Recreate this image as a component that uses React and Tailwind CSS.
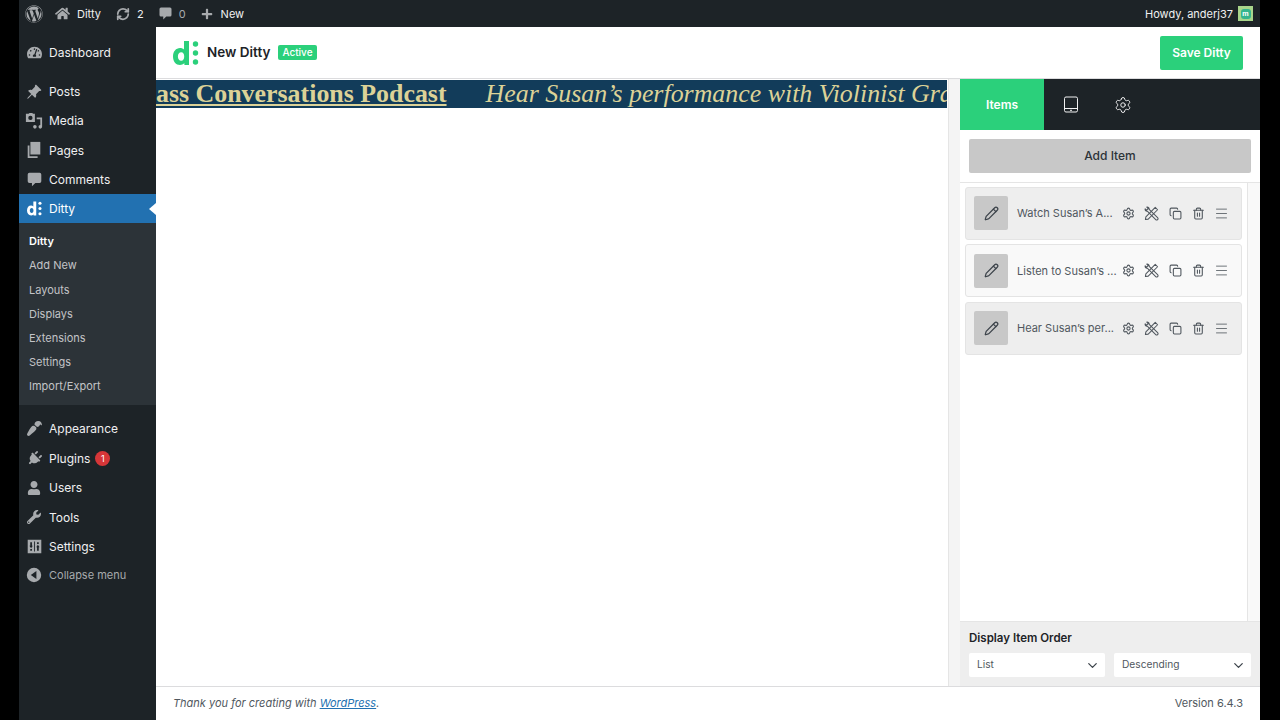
import React from 'react';
import { FaWordpress, FaTachometerAlt, FaPaintBrush, FaPlug, FaUser, FaWrench, FaHome, FaPlus } from 'react-icons/fa';
import { BsPinAngleFill } from 'react-icons/bs';
import { RefreshCw, Settings, Copy, Trash2, Menu, Pencil, ChevronDown } from 'lucide-react';

const font = { fontFamily: 'Inter, "Liberation Sans", sans-serif' };

function BubbleIcon({ size = 18, className = '' }) {
  return (
    <svg width={size} height={size} viewBox="0 0 20 20" className={className} fill="currentColor">
      <path d="M4 2h12a2 2 0 0 1 2 2v8a2 2 0 0 1-2 2h-5l-4 4v-4H4a2 2 0 0 1-2-2V4a2 2 0 0 1 2-2z" />
    </svg>
  );
}

function MediaIcon() {
  return (
    <svg width="18" height="18" viewBox="0 0 20 20" fill="currentColor">
      <path fillRule="evenodd" d="M1 2h3l1-1h3l1 1h2v9H1V2zm5 2.200a2.400 2.400 0 1 0 0 4.800 2.400 2.400 0 0 0 0-4.800z" />
      <path d="M13 6h6v10.500a2 2 0 1 1-2-2V8h-4V6z" />
      <circle cx="11" cy="16.500" r="2" />
    </svg>
  );
}

function PagesIcon() {
  return (
    <svg width="18" height="18" viewBox="0 0 20 20" fill="currentColor">
      <path d="M6 1h11v14H6z" />
      <path d="M3 5h2v12h9v2H3z" />
    </svg>
  );
}

function SlidersIcon() {
  return (
    <svg width="17" height="17" viewBox="0 0 20 20" fill="currentColor">
      <path fillRule="evenodd" d="M2 2h16v16H2V2zm3 3v4H4l2 3 2-3H7V5H5zm0 8v2h2v-2H5zm8-8v2h2V5h-2zm1 3-2 3h1v4h2v-4h1l-2-3zM9.500 4v12h1V4h-1z" />
    </svg>
  );
}

function CollapseIcon() {
  return (
    <svg width="16" height="16" viewBox="0 0 20 20" fill="currentColor">
      <path fillRule="evenodd" d="M10 1a9 9 0 1 1 0 18 9 9 0 0 1 0-18zm3 4-7 5 7 5V5z" />
    </svg>
  );
}

function TabletIcon() {
  return (
    <svg width="16" height="17" viewBox="0 0 16 17" fill="none" stroke="currentColor" strokeWidth="1">
      <rect x="1.500" y="1" width="13" height="15" rx="1.500" />
      <path d="M1.500 12.500h13" />
      <path d="M7 14.300h2" />
    </svg>
  );
}

function ToolsIcon({ className = '' }) {
  return (
    <svg width="15" height="15" viewBox="0 0 16 16" fill="none" stroke="currentColor" strokeWidth="1.100" strokeLinejoin="round" className={className}>
      <path d="M5.500 3.500 14.500 12.500a1.400 1.400 0 0 1-2 2L3.500 5.500C2 5.800 1 4.500 1.200 3l1.600 1.500L4.500 2.800 3 1.200C4.500 1 5.800 2 5.500 3.500z" />
      <path d="M12 1.500 14.500 4 4.500 14 1.500 14.500 2 11.500z" />
    </svg>
  );
}

function DittyLogo({ height, color }) {
  return (
    <svg height={height} viewBox="0 0 26 26" style={{ color }} fill="currentColor">
      <path fillRule="evenodd" d="M11 1h5v24h-4.600v-1.700A7.400 7.400 0 0 1 7 25c-4 0-7-3.500-7-8.500S3 8 7 8c1.700 0 3 .5 4 1.500V1zM8.200 12.300c-2 0-3.300 1.700-3.300 4.200s1.300 4.200 3.300 4.200 3-1.700 3-4.200-1-4.200-3-4.200z" />
      <circle cx="22.500" cy="4" r="2.700" />
      <circle cx="22.500" cy="13" r="2.700" />
      <circle cx="22.500" cy="22" r="2.700" />
    </svg>
  );
}

const topMenu = [{ label: 'Dashboard', icon: <FaTachometerAlt size={15} /> }];
const contentMenu = [
  { label: 'Posts', icon: <BsPinAngleFill size={16} /> },
  { label: 'Media', icon: <MediaIcon /> },
  { label: 'Pages', icon: <PagesIcon /> },
  { label: 'Comments', icon: <BubbleIcon size={17} /> },
];
const subMenu = ['Add New', 'Layouts', 'Displays', 'Extensions', 'Settings', 'Import/Export'];
const lowerMenu = [
  { label: 'Appearance', icon: <FaPaintBrush size={15} className="rotate-180" /> },
  { label: 'Plugins', icon: <FaPlug size={15} className="rotate-45" />, badge: '1' },
  { label: 'Users', icon: <FaUser size={14} /> },
  { label: 'Tools', icon: <FaWrench size={14} /> },
  { label: 'Settings', icon: <SlidersIcon /> },
];
const items = [
  { title: 'Watch Susan’s A...', shaded: true },
  { title: 'Listen to Susan’s ...', shaded: false },
  { title: 'Hear Susan’s per...', shaded: true },
];

function MenuRow({ label, icon, badge }) {
  return (
    <div className="flex h-[29.4px] items-center text-[12px] text-[#f0f0f1]">
      <span className="flex w-[30px] shrink-0 justify-center text-[#a7aaad]">{icon}</span>
      <span className="pt-px">{label}</span>
      {badge && (
        <span className="ml-[5px] mt-px flex h-[15px] w-[15px] items-center justify-center rounded-full bg-[#d63638] text-[9px] text-white">
          {badge}
        </span>
      )}
    </div>
  );
}

function Sidebar() {
  return (
    <aside className="w-[137px] shrink-0 bg-[#1d2327] pt-[10.5px]">
      {topMenu.map((m) => <MenuRow key={m.label} {...m} />)}
      <div className="h-[10px]" />
      {contentMenu.map((m) => <MenuRow key={m.label} {...m} />)}
      <div className="relative flex h-[29px] items-center bg-[#2271b1] text-[12px] text-white">
        <span className="flex w-[30px] shrink-0 justify-center">
          <DittyLogo height={15} color="#ffffff" />
        </span>
        <span>Ditty</span>
        <span className="absolute right-0 top-[9px] h-0 w-0 border-y-[6px] border-r-[7px] border-y-transparent border-r-white" />
      </div>
      <div className="bg-[#2c3338] py-[6px] text-[11px]">
        <div className="flex h-[24.2px] items-center pl-[10px] font-semibold text-white">Ditty</div>
        {subMenu.map((s) => (
          <div key={s} className="flex h-[24.2px] items-center pl-[10px] text-[#c3c4c7]">{s}</div>
        ))}
      </div>
      <div className="h-[9.5px]" />
      {lowerMenu.map((m) => <MenuRow key={m.label} {...m} />)}
      <div className="flex h-[29.4px] items-center pb-px text-[11px] text-[#a7aaad]">
        <span className="flex w-[30px] shrink-0 justify-center"><CollapseIcon /></span>
        <span>Collapse menu</span>
      </div>
    </aside>
  );
}

function AdminBar() {
  return (
    <header className="flex h-[27px] shrink-0 items-center bg-[#1d2327] pl-[6px] pr-[7px] text-[11px] text-[#f0f0f1]">
      <FaWordpress size={18} className="text-[#a7aaad]" />
      <FaHome size={15} className="ml-[12px] text-[#a7aaad]" />
      <span className="ml-[7px] pt-px">Ditty</span>
      <RefreshCw size={14} strokeWidth={3} className="ml-[15px] text-[#a7aaad]" />
      <span className="ml-[7px] pt-px">2</span>
      <BubbleIcon size={15} className="ml-[14px] text-[#a7aaad]" />
      <span className="ml-[6px] pt-px text-[#a7aaad]">0</span>
      <FaPlus size={12} className="ml-[15px] text-[#a7aaad]" />
      <span className="ml-[8px] pt-px">New</span>
      <span className="ml-auto pt-px">Howdy, anderj37</span>
      <span className="ml-[5px] flex h-[15px] w-[15px] items-center justify-center bg-[#a9d58b]">
        <span className="flex h-[10px] w-[10px] items-center justify-center rounded-[3px] bg-[#35b58e] text-[7px] font-bold leading-none text-white">m</span>
      </span>
    </header>
  );
}

function Ticker() {
  return (
    <div className="mt-px h-[28px] w-[791px] overflow-hidden whitespace-nowrap bg-[#123c5a] text-[25.9px] leading-[28px] text-[#dcd297]" style={{ fontFamily: '"Liberation Serif", serif' }}>
      <div className="flex">
        <span className="font-bold underline decoration-2 underline-offset-2">ass Conversations Podcast</span>
        <span className="ml-[39px] italic">Hear Susan’s performance with Violinist Grace</span>
      </div>
    </div>
  );
}

function ItemRow({ title, shaded }) {
  const iconClass = 'text-[#50575e]';
  return (
    <div className={`flex h-[53px] items-center rounded-[3px] border border-[#e4e4e4] pl-[8px] ${shaded ? 'bg-[#eeeeee]' : 'bg-[#f9f9f9]'}`}>
      <span className="flex h-[34px] w-[34px] shrink-0 items-center justify-center rounded-[2px] bg-[#c8c8c8]">
        <Pencil size={15} className="text-[#3c434a]" />
      </span>
      <span className="ml-[9px] w-[105px] shrink-0 whitespace-nowrap pt-px text-[11px] text-[#50575e]">{title}</span>
      <span className="flex items-center">
        <Settings size={13} className={iconClass} />
        <ToolsIcon className={`ml-[9px] ${iconClass}`} />
        <Copy size={13} className={`ml-[10px] ${iconClass}`} />
        <Trash2 size={13} className={`ml-[10px] ${iconClass}`} />
        <Menu size={15} strokeWidth={1.3} className={`ml-[9px] ${iconClass}`} />
      </span>
    </div>
  );
}

function SelectBox({ label, width }) {
  return (
    <div className={`flex h-[24px] items-center justify-between rounded-[2px] bg-white pl-[8px] pr-[5px] text-[10.2px] text-[#50575e] ${width}`}>
      <span>{label}</span>
      <ChevronDown size={15} className="text-[#3c434a]" />
    </div>
  );
}

function Panel() {
  return (
    <div className="flex w-[300px] shrink-0 flex-col bg-white">
      <div className="flex h-[51px] shrink-0 items-center bg-[#1d2327]">
        <div className="flex h-full w-[84px] items-center justify-center bg-[#2bd07b] text-[12px] font-semibold text-white">Items</div>
        <span className="ml-[19px] text-[#f0f0f1]"><TabletIcon /></span>
        <Settings size={18} strokeWidth={1.3} className="ml-[35px] text-[#f0f0f1]" />
      </div>
      <div className="shrink-0 border-b border-[#e5e5e5] p-[9px]">
        <div className="flex h-[34px] items-center justify-center rounded-[2px] bg-[#c8c8c8] text-[12px] font-medium text-[#2c3338]">Add Item</div>
      </div>
      <div className="flex min-h-0 flex-1">
        <div className="flex w-[287px] shrink-0 flex-col gap-[4.5px] px-[5px] pt-[3.5px]">
          {items.map((it) => <ItemRow key={it.title} {...it} />)}
        </div>
        <div className="flex-1 border-l border-[#e5e5e5] bg-[#f9f9f9]" />
      </div>
      <div className="h-[65px] shrink-0 border-t border-[#e5e5e5] bg-[#eeeeee] px-[9px] pt-[9px]">
        <div className="text-[11.5px] font-semibold leading-[15px] text-[#1d2327]">Display Item Order</div>
        <div className="mt-[7px] flex gap-[9px]">
          <SelectBox label="List" width="w-[136px]" />
          <SelectBox label="Descending" width="w-[137px]" />
        </div>
      </div>
    </div>
  );
}

export default function App() {
  return (
    <div className="flex h-[720px] w-[1280px] overflow-hidden bg-black pl-[19px] pr-[20px]" style={font}>
      <div className="flex w-[1241px] flex-col bg-white">
        <AdminBar />
        <div className="flex min-h-0 flex-1">
          <Sidebar />
          <main className="flex min-w-0 flex-1 flex-col">
            <div className="flex h-[52px] shrink-0 items-center border-b border-[#dcdcde] px-[17px]">
              <DittyLogo height={26} color="#2bd07b" />
              <span className="ml-[8px] text-[13.5px] font-semibold text-[#1d2327]">New Ditty</span>
              <span className="ml-[8px] rounded-[2px] bg-[#2bd07b] px-[4px] text-[10px] font-medium leading-[15px] text-white">Active</span>
              <button className="ml-auto h-[34px] w-[83px] rounded-[2px] bg-[#2bd07b] text-[12px] font-semibold text-white">Save Ditty</button>
            </div>
            <div className="flex min-h-0 flex-1">
              <div className="w-[792px] shrink-0 bg-white"><Ticker /></div>
              <div className="w-[12px] shrink-0 border-l border-[#e5e5e5] bg-[#f4f4f4]" />
              <Panel />
            </div>
            <footer className="flex h-[34px] shrink-0 items-center justify-between border-t border-[#dcdcde] bg-white px-[17px] text-[11px] text-[#50575e]">
              <span className="italic">Thank you for creating with <span className="text-[#2271b1] underline">WordPress</span>.</span>
              <span>Version 6.4.3</span>
            </footer>
          </main>
        </div>
      </div>
    </div>
  );
}
